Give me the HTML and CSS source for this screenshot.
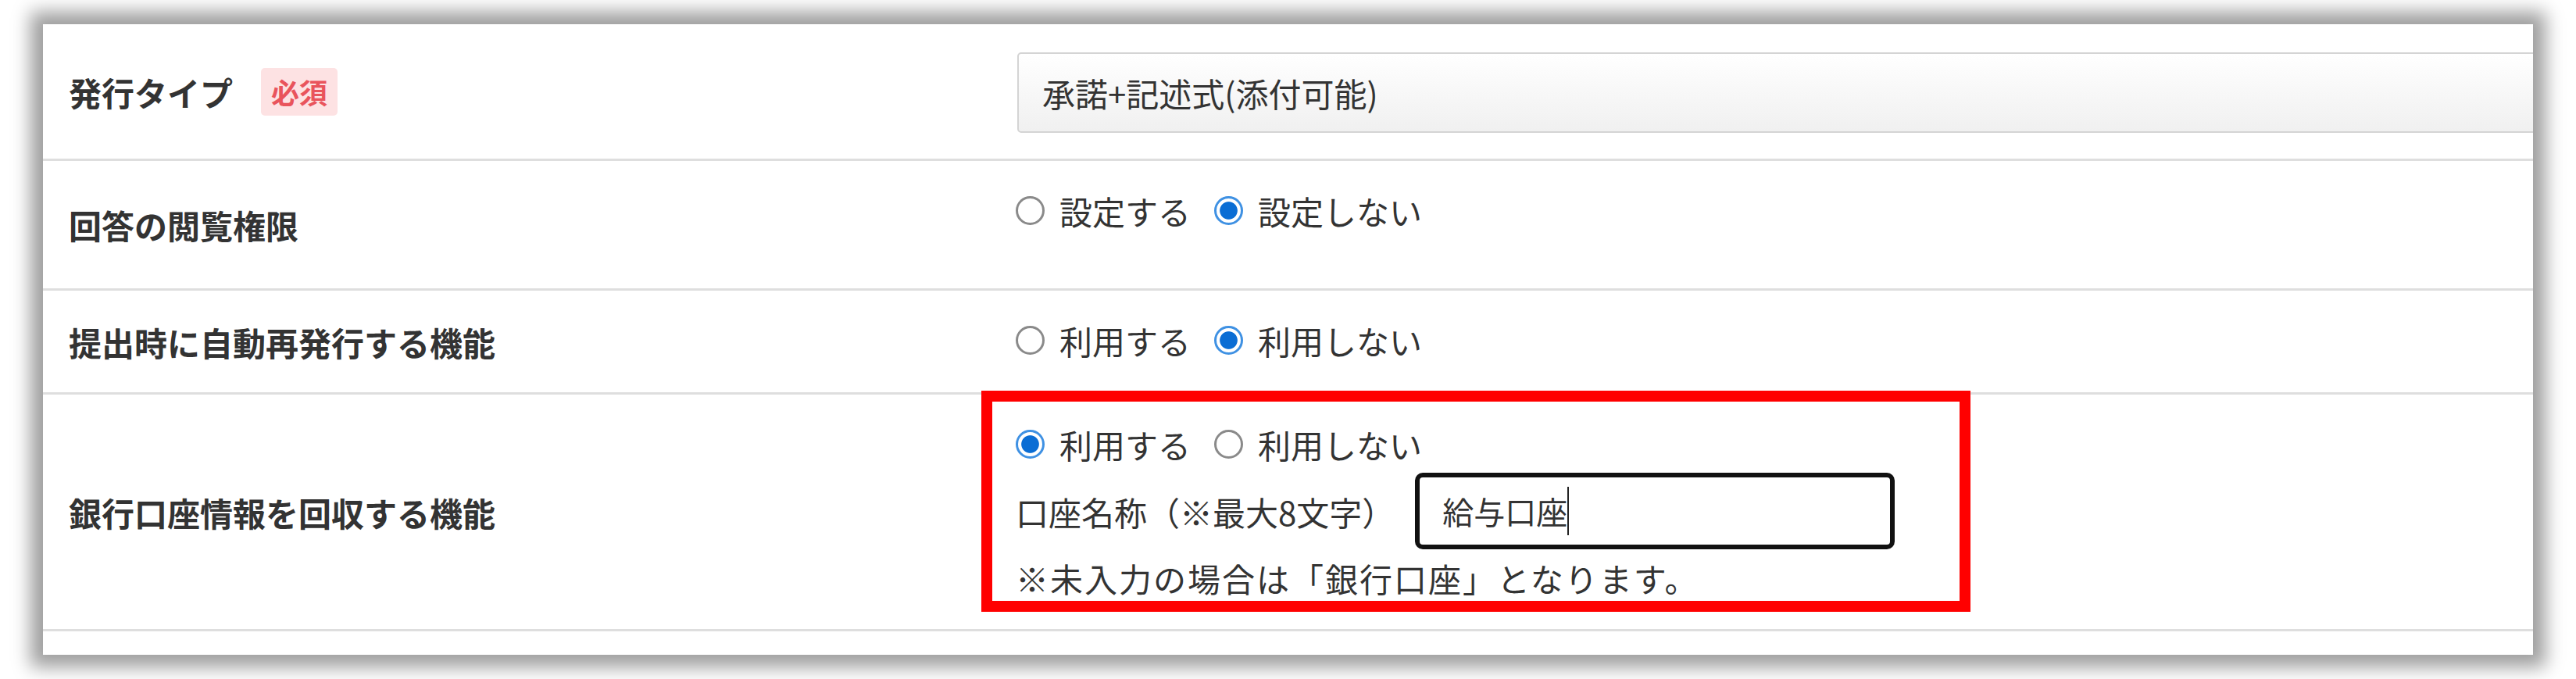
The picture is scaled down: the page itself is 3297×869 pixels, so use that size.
FILE: index.html
```html
<!DOCTYPE html>
<html lang="ja">
<head>
  <meta charset="UTF-8">
  <title>発行設定</title>
  <link rel="stylesheet" href="styles.css">
</head>
<body>
  <div class="frame">
    <div class="panel">

      <div class="row">
        <div class="label">発行タイプ<span class="badge">必須</span></div>
        <div class="value value-select">
          <div class="select">承諾+記述式(添付可能)</div>
        </div>
      </div>

      <div class="row">
        <div class="label">回答の閲覧権限</div>
        <div class="value value-radio">
          <div class="radios">
            <label><input type="radio" name="etsuran" class="radio">設定する</label>
            <label><input type="radio" name="etsuran" class="radio" checked>設定しない</label>
          </div>
          <div class="spacer"></div>
        </div>
      </div>

      <div class="row">
        <div class="label">提出時に自動再発行する機能</div>
        <div class="value value-radio">
          <div class="radios">
            <label><input type="radio" name="saihakko" class="radio">利用する</label>
            <label><input type="radio" name="saihakko" class="radio" checked>利用しない</label>
          </div>
        </div>
      </div>

      <div class="row">
        <div class="label">銀行口座情報を回収する機能</div>
        <div class="value value-bank">
          <div class="highlight">
            <div class="radios">
              <label><input type="radio" name="ginko" class="radio" checked>利用する</label>
              <label><input type="radio" name="ginko" class="radio">利用しない</label>
            </div>
            <div class="account">
              <span>口座名称（※最大8文字）</span>
              <div class="text-input"><span class="typed">給与口座</span></div>
            </div>
            <p class="note">※未入力の場合は「銀行口座」となります。</p>
          </div>
        </div>
      </div>

      <div class="row row-empty"></div>

    </div>
  </div>
</body>
</html>
```

FILE: styles.css
```css
body {
  margin: 0;
  background-color: #fff;
  font-family: "Noto Sans CJK JP", "Noto Sans", sans-serif;
  color: #333;
  font-size: 42px;
}

.frame {
  padding: 31px 55px;
}

.panel {
  background-color: #fff;
  height: 807px;
  overflow: hidden;
  box-shadow: 0 0 22px 16px rgba(0, 0, 0, 0.38);
}

.row {
  display: grid;
  grid-template-columns: 1245px 1fr;
  border-bottom: 3px solid #dedede;
}

.row-empty {
  height: 30px;
  border-bottom: none;
}

.label {
  display: flex;
  align-items: center;
  padding-left: 33px;
  font-weight: 700;
}

.badge {
  margin-left: 36px;
  padding: 0 13px;
  height: 61px;
  line-height: 61px;
  font-size: 36px;
  font-weight: 700;
  color: #e9545c;
  background-color: #fde2e3;
  border-radius: 5px;
}

.value-select {
  padding: 36px 0 33px 2px;
}

.select {
  box-sizing: border-box;
  height: 103px;
  margin-right: -40px;
  padding-left: 30px;
  display: flex;
  align-items: center;
  border: 2px solid #d4d4d4;
  border-radius: 5px;
  background: linear-gradient(#fff, #f0f0f0);
}

.value-radio {
  padding: 33px 0 37px;
}

.spacer {
  height: 33px;
}

.radios {
  display: flex;
  align-items: center;
  gap: 30px;
  height: 60px;
}

.radios label {
  display: flex;
  align-items: center;
}

.radio {
  appearance: none;
  box-sizing: border-box;
  width: 37px;
  height: 37px;
  margin: 0 19px 0 0;
  border: 3px solid #8a8a8a;
  border-radius: 50%;
  background-color: #fff;
}

.radio:checked {
  border-color: #3f91e3;
  background: radial-gradient(circle closest-side, #0a6dd4 70%, #fff 76%);
}

.value-bank {
  padding-bottom: 22px;
}

.highlight {
  box-sizing: border-box;
  width: 1266px;
  margin: -5px 0 0 -44px;
  padding: 24px 0 1px 30px;
  border: 14px solid #ff0000;
}

.account {
  display: flex;
  align-items: center;
  margin-top: 7px;
}

.text-input {
  box-sizing: border-box;
  width: 614px;
  height: 98px;
  margin-left: 26px;
  padding-left: 29px;
  display: flex;
  align-items: center;
  border: 6px solid #111;
  border-radius: 10px;
  font-size: 40px;
}

.typed {
  border-right: 2px solid #222;
  line-height: 62px;
}

.note {
  margin: 9px 0 0;
  line-height: 56px;
  letter-spacing: 2px;
}
```
